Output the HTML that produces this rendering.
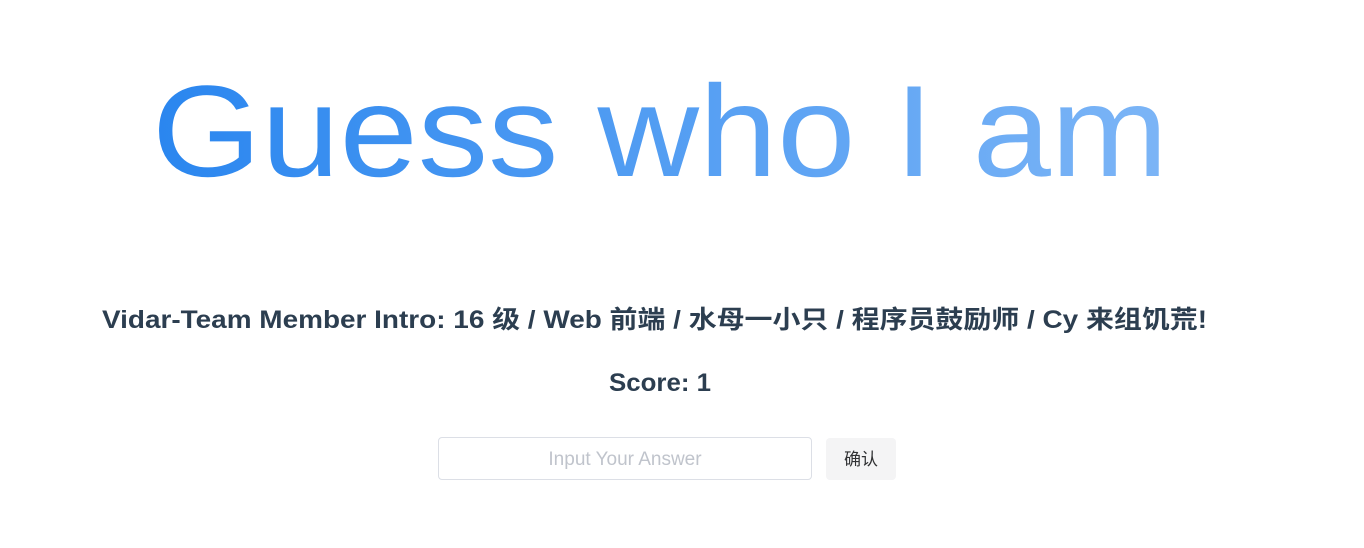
<!DOCTYPE html>
<html><head><meta charset="utf-8"><style>
html,body{margin:0;padding:0;background:#fff;width:1364px;height:548px;overflow:hidden}
svg{position:absolute;left:0;top:0}
.inp{position:absolute;left:438px;top:437px;width:372px;height:41px;border:1px solid #dcdfe6;border-radius:4px;box-sizing:content-box;text-align:center;font:19px/43px "Liberation Sans",sans-serif;color:#c0c4cc}
.btn{position:absolute;left:826px;top:438px;width:70px;height:42px;background:#f4f4f5;border-radius:4px;text-align:center;font:17px/43px "Liberation Sans","Noto Sans CJK SC",sans-serif;color:#303133}
</style></head><body>
<svg width="1364" height="548">
<defs><linearGradient id="g" x1="152" x2="1168" y1="0" y2="0" gradientUnits="userSpaceOnUse">
<stop offset="0" stop-color="#2a86ef"/><stop offset="1" stop-color="#7cb5f6"/></linearGradient></defs>
<text x="152" y="176" font-family="Liberation Sans,sans-serif" font-size="130" fill="url(#g)" textLength="1016" lengthAdjust="spacingAndGlyphs">Guess who I am</text>
<text x="102" y="328" font-family="Liberation Sans,Noto Sans CJK SC,sans-serif" font-weight="bold" font-size="25" fill="#2c3e50" textLength="1105" lengthAdjust="spacingAndGlyphs">Vidar-Team Member Intro: 16 级 / Web 前端 / 水母一小只 / 程序员鼓励师 / Cy 来组饥荒!</text>
<text x="609" y="391" font-family="Liberation Sans,sans-serif" font-weight="bold" font-size="25" fill="#2c3e50" textLength="102" lengthAdjust="spacingAndGlyphs">Score: 1</text>
</svg>
<div class="inp">Input Your Answer</div>
<div class="btn">确认</div>
</body></html>
